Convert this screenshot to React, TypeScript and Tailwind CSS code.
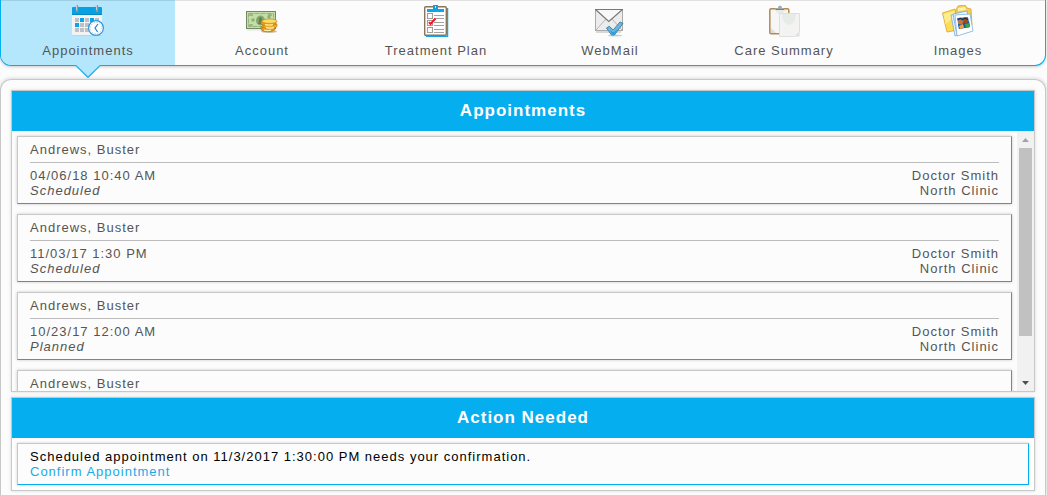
import { useRef, useState } from "react";
import type { ReactNode } from "react";

interface Appointment {
  patient: string;
  time: string;
  status: string;
  provider: string;
  clinic: string;
}

const appointments: Appointment[] = [
  {
    patient: "Andrews, Buster",
    time: "04/06/18 10:40 AM",
    status: "Scheduled",
    provider: "Doctor Smith",
    clinic: "North Clinic",
  },
  {
    patient: "Andrews, Buster",
    time: "11/03/17 1:30 PM",
    status: "Scheduled",
    provider: "Doctor Smith",
    clinic: "North Clinic",
  },
  {
    patient: "Andrews, Buster",
    time: "10/23/17 12:00 AM",
    status: "Planned",
    provider: "Doctor Smith",
    clinic: "North Clinic",
  },
  {
    patient: "Andrews, Buster",
    time: "09/12/17 9:00 AM",
    status: "Planned",
    provider: "Doctor Smith",
    clinic: "North Clinic",
  },
];

function CalendarIcon() {
  return (
    <svg viewBox="0 0 32 32" className="size-8" aria-hidden="true">
      <path d="M0 10h30v20.5H1L0 29z" fill="#f3f3f3" />
      <path d="M1 30.5h29" stroke="#c4d3da" />
      <path d="M0 3q0-1 1-1h28q1 0 1 1v7H0z" fill="#06a0e3" />
      <path d="M0 9h30v1H0z" fill="#0687c4" />
      <path d="M5 1v5M25 1v5" stroke="#8d9aa3" strokeWidth="2.4" strokeLinecap="round" />
      <path d="M4.5 0v5M24.5 0v5" stroke="#c6ccd0" />
      <g fill="#bcc1c5">
        <path d="M3 13h4v4H3zM13 13h4v4h-4zM23 13h4v4h-4zM8 18h4v4H8zM13 18h4v4h-4zM18 18h4v4h-4zM3 23h4v4H3zM8 23h4v4H8zM13 23h4v4h-4z" />
      </g>
      <path d="M8 13h4v4H8zM18 13h4v4h-4zM3 18h4v4H3z" fill="#06a5ea" />
      <circle cx="24" cy="23" r="7.4" fill="#fff" stroke="#2c97dd" strokeWidth="1.2" />
      <circle cx="24" cy="23" r="5.6" fill="none" stroke="#8ec4e8" strokeWidth="1" strokeDasharray="1 1.93" />
      <path d="M26 19l-3 4 2.6 4" fill="none" stroke="#2182c8" strokeWidth="1.2" />
    </svg>
  );
}

function MoneyIcon() {
  return (
    <svg viewBox="0 0 32 32" className="size-8" aria-hidden="true">
      <path d="M1 25h20" stroke="#ddd" />
      <rect x="0.5" y="6.5" width="29" height="17" fill="#c5dda9" stroke="#748765" />
      <rect x="2.5" y="8.5" width="25" height="13" fill="none" stroke="#93b57a" strokeDasharray="5 1" />
      <ellipse cx="14.5" cy="15.5" rx="4.5" ry="5" fill="#86a86f" />
      <path d="M14 12q2 0 2 2t-1 2.500l2 2.500h-5l1-3q-1-3 1-4z" fill="#628350" />
      <circle cx="7" cy="15" r="1.7" fill="#8bb071" />
      <circle cx="23" cy="12" r="1.7" fill="#8bb071" />
      <path d="M3 10h4M22 10h4M3 20h4" stroke="#72965c" />
      <ellipse cx="23" cy="26.500" rx="8" ry="1.500" fill="#8b7a60" opacity="0.5" />
      <path d="M15 22v2c0 3.500 14 3.500 14 0v-2z" fill="#e69a1c" stroke="#a96914" strokeWidth="0.6" />
      <path d="M16.500 19v2c0 3.500 14.500 3.500 14.500 0v-2z" fill="#f4ad25" stroke="#b37113" strokeWidth="0.6" />
      <path d="M15 16v2.500c0 3 15 3 15 0V16z" fill="#e99d1c" stroke="#b37113" strokeWidth="0.6" />
      <ellipse cx="23.500" cy="16.200" rx="7.600" ry="2.200" fill="#ffdd62" stroke="#c98717" strokeWidth="0.7" />
      <path d="M19 19.600q4 1 8 0M20 22.600q4 1 8 0M18 25.200q4 .8 7 0" fill="none" stroke="#fff0a5" strokeWidth="1.3" />
    </svg>
  );
}

function ChecklistIcon() {
  return (
    <svg viewBox="0 0 32 32" className="size-8" aria-hidden="true">
      <path d="M6 31.500h21.500V3" fill="none" stroke="#14a8e6" strokeWidth="1.500" />
      <rect x="4.700" y="1.700" width="21.600" height="28.600" rx="1" fill="#fff" stroke="#88755e" strokeWidth="1.400" />
      <path d="M7 4h17v3H7z" fill="#0ba7e8" />
      <path d="M13 0h5v4h-5z" fill="#109fda" />
      <path d="M15 1h1v2h-1z" fill="#c5edff" />
      <g fill="#fff" stroke="#a19d99" strokeWidth="1.100">
        <path d="M7.500 8.500h5v5h-5zM7.500 15.500h5v5h-5zM7.500 22.500h5v5h-5z" />
      </g>
      <path d="M14 10.500h10M14 13.500h10M14 17.500h10M14 20.500h10M14 24.500h10M14 27.500h10" stroke="#a5a19e" />
      <path d="M9 17l1.500 2 5-5.500" fill="none" stroke="#f31819" strokeWidth="1.900" />
    </svg>
  );
}

function MailIcon() {
  return (
    <svg viewBox="0 0 32 32" className="size-8" aria-hidden="true">
      <path d="M2 27h25" stroke="#ccc" strokeWidth="1.500" />
      <rect x="1.500" y="4.500" width="27" height="21" fill="#ececec" stroke="#aaa" />
      <path d="M2 5h26L15 16z" fill="#f8f8f8" />
      <path d="M2 25l10-11M28 25L18 14" stroke="#b6b6b6" />
      <path d="M1.500 4.500L14.800 16.500 28.500 4.500" fill="none" stroke="#777" strokeWidth="1.100" />
      <path d="M1 4.500h28" stroke="#777" />
      <ellipse cx="21" cy="30.500" rx="7" ry="1" fill="#bdd4df" />
      <path d="M12.500 23l2.700-1.700 4 3.700L26 17l3 1.300L20.500 30h-3z" fill="#6cb7dd" stroke="#397da2" strokeWidth="0.900" />
      <path d="M16 25l3.500 2.500L24 24l-4 5.500h-2z" fill="#209fe0" />
    </svg>
  );
}

function ClipboardIcon() {
  return (
    <svg viewBox="0 0 32 32" className="size-8" aria-hidden="true">
      <rect x="1.800" y="3.800" width="19" height="25" rx="1.300" fill="#eee" stroke="#b58a4d" strokeWidth="1.500" />
      <path d="M3 5h17v23H8l-5-5z" fill="#f5f6f5" />
      <path d="M3 23l5 5H3z" fill="#ddd" />
      <path d="M7 5q5 8 11 0z" fill="#e8eae8" />
      <path d="M7 5V3h3q0-2.500 2-2.500T14 3h2v2z" fill="#a3a9ac" />
      <path d="M8 4.500h8" stroke="#77818a" />
      <path d="M11.500 8.500h20V27l-4.500 4.500H11.500z" fill="#f2f3f2" stroke="#dedfde" />
      <path d="M14 9h14q-1 11-7 11T14 9z" fill="#e7ebe7" />
      <path d="M31.500 27l-4.500 4.500h4.500z" fill="#ddd" />
    </svg>
  );
}

function PicturesIcon() {
  return (
    <svg viewBox="0 0 32 32" className="size-8" aria-hidden="true">
      <path d="M14 5l2-4 7-1 2 3 4 1 1 16-20 3z" fill="#f5cf55" stroke="#d4a432" strokeWidth="0.800" />
      <path d="M16 3l7-1 1 3-8 1z" fill="#fff2ae" />
      <path d="M.5 8L13 4l3 21-11 2z" fill="#ffdc52" stroke="#d4a432" strokeWidth="0.800" />
      <path d="M1.500 9l11-3 1 6q-6 3-10 7z" fill="#ffec8f" />
      <path d="M9 10l11-2 5 18-12 5z" fill="#e8f3ff" stroke="#77a9d8" strokeWidth="0.800" />
      <path d="M11 9l14-3 4 20-14 4z" fill="#eef6ff" stroke="#6aa4dc" strokeWidth="0.800" />
      <path d="M13 10l15-1 3 17-16 5z" fill="#fff" stroke="#7bb2e4" strokeWidth="0.800" />
      <path d="M15 13l11-1 2 10-11 2z" fill="#3983d2" />
      <path d="M16 19l11-3 1 6-11 2z" fill="#1d5a9c" />
      <circle cx="18.500" cy="17" r="2.500" fill="#c87538" />
      <circle cx="23.500" cy="16" r="2.300" fill="#a34a21" />
      <path d="M16 15q2-3 5 0M21 14q3-2 5 1" stroke="#342c2c" strokeWidth="1.300" fill="none" />
      <path d="M17 21l4-2 1 4-4 1z" fill="#f0a33e" />
      <path d="M23 19l4-1 1 4-4 1z" fill="#37a648" />
    </svg>
  );
}

const tabs: { label: string; icon: ReactNode }[] = [
  { label: "Appointments", icon: <CalendarIcon /> },
  { label: "Account", icon: <MoneyIcon /> },
  { label: "Treatment Plan", icon: <ChecklistIcon /> },
  { label: "WebMail", icon: <MailIcon /> },
  { label: "Care Summary", icon: <ClipboardIcon /> },
  { label: "Images", icon: <PicturesIcon /> },
];

function NavTabs() {
  const [active, setActive] = useState("Appointments");

  return (
    <nav className="mr-px grid grid-cols-6 rounded-b-[11px] border border-t-0 border-[#05aeef] bg-[#fcfcfc] shadow-[0_1px_3px_rgba(0,0,0,0.2)]">
      {tabs.map(({ label, icon }) => (
        <button
          key={label}
          type="button"
          aria-current={active === label ? "page" : undefined}
          onClick={() => setActive(label)}
          className={`relative flex cursor-pointer flex-col items-center border-t border-black/10 pt-1 pb-[7px] first:rounded-bl-[10px] last:rounded-br-[10px] ${
            active === label ? "bg-[#b4e7fc]" : ""
          }`}
        >
          {icon}
          <span className="mt-1.5">{label}</span>
          {active === label && (
            <svg
              viewBox="0 0 28 15"
              className="absolute top-full left-1/2 -mt-px h-[15px] w-7 -translate-x-1/2"
              aria-hidden="true"
            >
              <path d="M1 0h26v1L14 14 1 1z" fill="#b4e7fc" />
              <path d="M1 1.500h1L14 13.300 26 1.500h1" fill="none" stroke="#20b0ee" strokeWidth="1.200" />
            </svg>
          )}
        </button>
      ))}
    </nav>
  );
}

function Section({ title, children }: { title: string; children: ReactNode }) {
  return (
    <section className="border border-[#c8c8c8] bg-white shadow-[0_0_3px_rgba(0,0,0,0.15)]">
      <h2 className="bg-[#05aeef] text-center text-[17px] leading-10 font-bold text-white">
        {title}
      </h2>
      {children}
    </section>
  );
}

function Card({ children }: { children: ReactNode }) {
  return (
    <div className="border border-t-[#c8c8c8] border-r-[#05aeef] border-b-[#05aeef] border-l-[#c8c8c8] bg-[#fcfcfc] px-3 shadow-[0_0_3px_rgba(0,0,0,0.2)]">
      {children}
    </div>
  );
}

function AppointmentCard({ appointment }: { appointment: Appointment }) {
  return (
    <Card>
      <h3 className="border-b border-[#bdbdbd] py-[5px]">{appointment.patient}</h3>
      <div className="flex justify-between py-[5px]">
        <div>
          <p>{appointment.time}</p>
          <p className="italic">{appointment.status}</p>
        </div>
        <div className="text-right">
          <p>{appointment.provider}</p>
          <p>{appointment.clinic}</p>
        </div>
      </div>
    </Card>
  );
}

function AppointmentList() {
  const listRef = useRef<HTMLDivElement>(null);
  const [scrollTop, setScrollTop] = useState(0);

  const scroll = (amount: number) => listRef.current?.scrollBy({ top: amount });

  // 226px of track for 312px of content
  const thumbTop = Math.round((scrollTop * 226) / 312);

  return (
    <div className="flex h-65 bg-[#fcfcfc]">
      <div
        ref={listRef}
        onScroll={(e) => setScrollTop(e.currentTarget.scrollTop)}
        className="flex flex-1 flex-col gap-2.5 overflow-y-auto p-[5px] [scrollbar-width:none] *:shrink-0"
      >
        {appointments.map((appointment) => (
          <AppointmentCard key={appointment.time} appointment={appointment} />
        ))}
      </div>
      <div className="flex w-[17px] flex-col bg-[#f1f1f1]">
        <button
          type="button"
          aria-label="Scroll up"
          onClick={() => scroll(-40)}
          className="flex h-[17px] items-center justify-center"
        >
          <svg viewBox="0 0 7 4" className="h-1 w-[7px]" aria-hidden="true">
            <path d="M0 4L3.500 0 7 4z" fill="#a3a3a3" />
          </svg>
        </button>
        <div className="flex-1 px-0.5">
          <div className="h-47 bg-[#c1c1c1]" style={{ marginTop: thumbTop }} />
        </div>
        <button
          type="button"
          aria-label="Scroll down"
          onClick={() => scroll(40)}
          className="flex h-[17px] items-center justify-center"
        >
          <svg viewBox="0 0 7 4" className="h-1 w-[7px]" aria-hidden="true">
            <path d="M0 0h7L3.500 4z" fill="#505050" />
          </svg>
        </button>
      </div>
    </div>
  );
}

export default function App() {
  return (
    <div className="flex min-h-screen flex-col gap-[13px] bg-[#fcfcfc] font-['Liberation_Sans',Arial,sans-serif] text-[13px] leading-[15px] tracking-[1px] text-[#555]">
      <NavTabs />
      <main className="mr-px flex flex-1 flex-col gap-[5px] rounded-t-[11px] border border-b-0 border-[#c8c8c8] px-2.5 pt-2.5 pb-1 shadow-[0_0_4px_rgba(0,0,0,0.2)]">
        <Section title="Appointments">
          <AppointmentList />
        </Section>
        <Section title="Action Needed">
          <div className="p-[5px]">
            <Card>
              <div className="py-[5px]">
                <p className="text-black">
                  Scheduled appointment on 11/3/2017 1:30:00 PM needs your confirmation.
                </p>
                <a href="#confirm" className="block w-fit text-[#1ba9e8]">
                  Confirm Appointment
                </a>
              </div>
            </Card>
          </div>
        </Section>
      </main>
    </div>
  );
}
